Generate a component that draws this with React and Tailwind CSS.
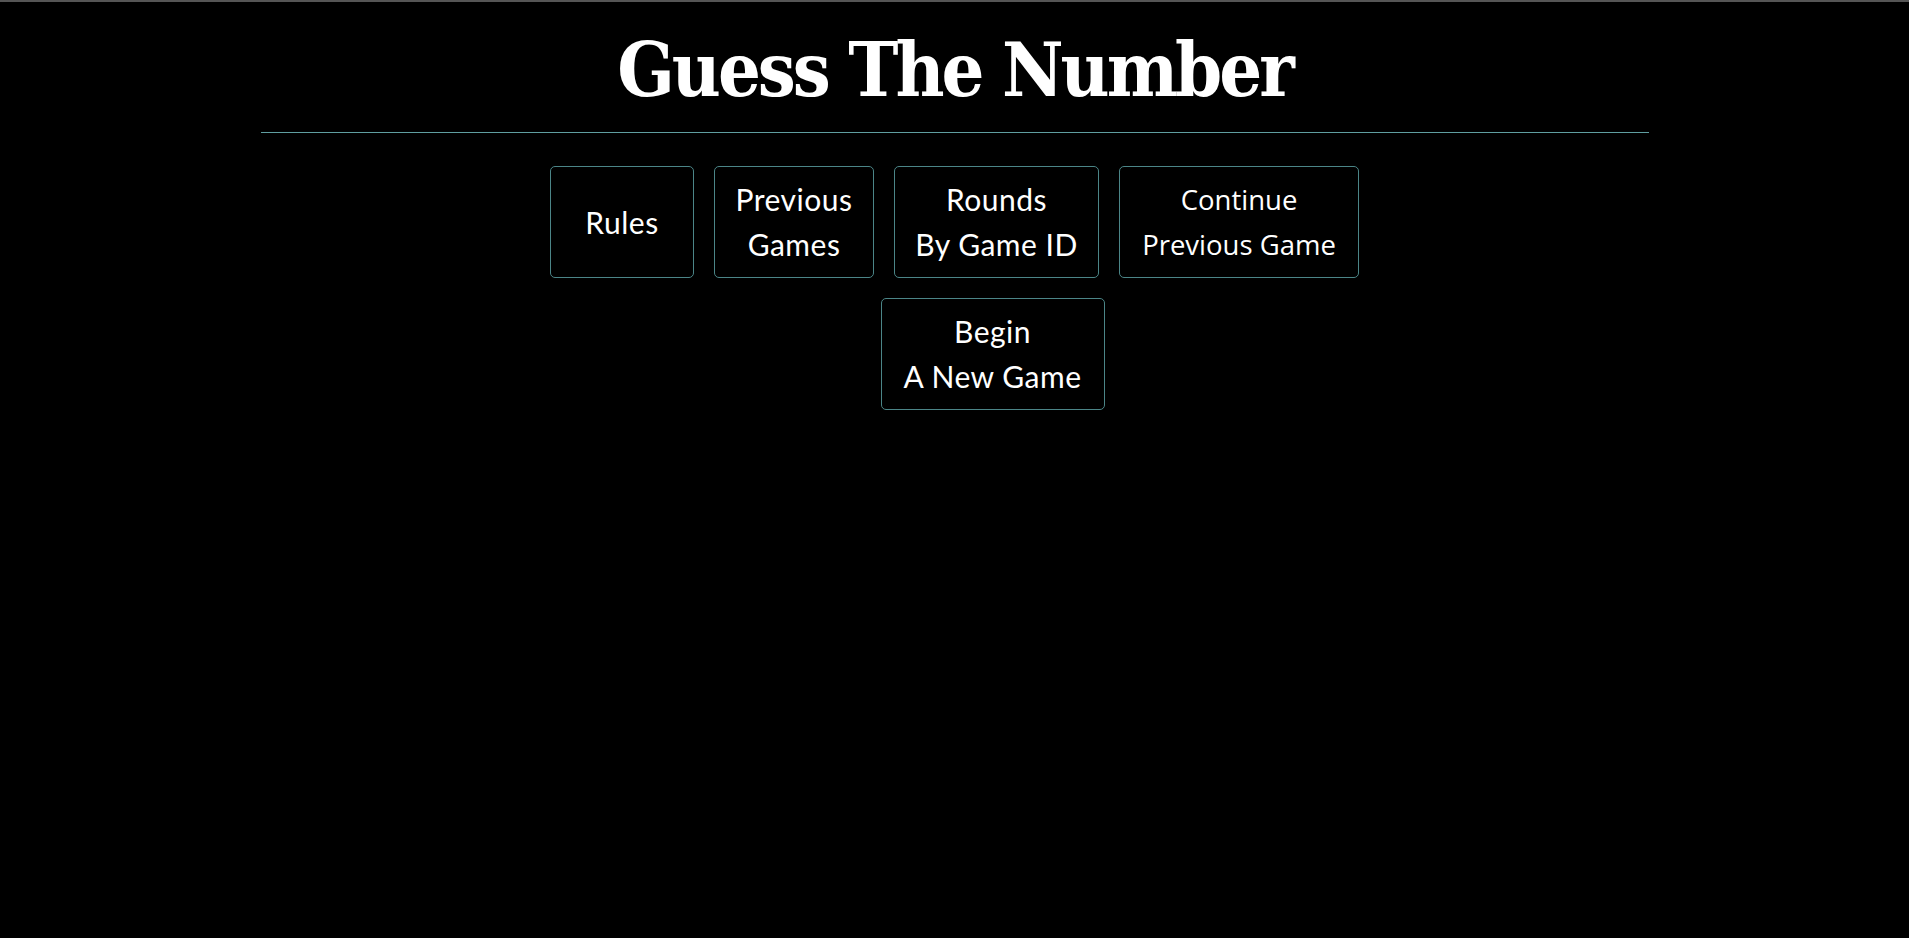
import React from 'react';

const menu = [
    { lines: ['Rules'], w: 'w-[144px]' },
    { lines: ['Previous', 'Games'], w: 'w-[160px]' },
    { lines: ['Rounds', 'By Game ID'], w: 'w-[205px]' },
    { lines: ['Continue', 'Previous Game'], w: 'w-[240px]', alt: true },
];

const MenuButton = ({ lines, w, alt }) => (
    <button
        className={`${w} h-[112px] flex flex-col items-center justify-center rounded-[5px] border border-[#4b8587] bg-black text-white leading-[45px] ${alt ? "font-['Open_Sans',sans-serif] text-[27.5px]" : "font-['Lato',sans-serif] text-[30px] tracking-[0.5px]"}`}
    >
        {lines.map(l => (
            <span key={l}>{l}</span>
        ))}
    </button>
);

export default function App() {
    return (
        <div className="min-h-[938px] bg-black border-t-2 border-[#555555]">
            <h1 className="pt-[18px] text-center text-white font-['DejaVu_Serif_Condensed','DejaVu_Serif',serif] font-bold text-[75px] leading-[100px] tracking-[-3px]">
                Guess The Number
            </h1>
            <div className="w-[1388px] mx-auto mt-[12px] h-px bg-[#5f9ea0]" />
            <div className="flex justify-center gap-[20px] mt-[33px]">
                {menu.map(m => (
                    <MenuButton key={m.lines[0]} {...m} />
                ))}
            </div>
            <div className="flex justify-center mt-[20px] pl-[76px]">
                <MenuButton lines={['Begin', 'A New Game']} w="w-[224px]" />
            </div>
        </div>
    );
}
